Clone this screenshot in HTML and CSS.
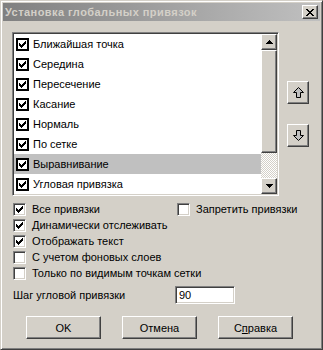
FILE: index.html
```html
<!DOCTYPE html>
<html lang="ru">
<head>
    <meta charset="UTF-8">
    <meta name="viewport" content="width=device-width, initial-scale=1.0">
    <title>Установка глобальных привязок</title>
    <link rel="stylesheet" href="styles.css">
</head>
<body>
    <div class="window">
        <div class="title-bar">
            <span class="title">Установка глобальных привязок</span>
            <button class="close-btn">
                <svg width="8" height="7" viewBox="0 0 8 7"><path d="M0 0h2v1h-2z M6 0h2v1h-2z M1 1h2v1h-2z M5 1h2v1h-2z M2 2h4v1h-4z M3 3h2v1h-2z M2 4h4v1h-4z M1 5h2v1h-2z M5 5h2v1h-2z M0 6h2v1h-2z M6 6h2v1h-2z" fill="#000"/></svg>
            </button>
        </div>
        <div class="content">
            <div class="top-row">
                <div class="listbox">
                    <div class="list-items">
                        <div class="item"><span class="lb-check"><svg width="9" height="9" viewBox="0 0 9 9"><path class="tick" d="M1 3h1v1h1v1h1v-1h1v-1h1v-1h1v-1h1v3h-1v1h-1v1h-1v1h-1v1h-1v-1h-1v-1h-1z"/></svg></span>Ближайшая точка</div>
                        <div class="item"><span class="lb-check"><svg width="9" height="9" viewBox="0 0 9 9"><path class="tick" d="M1 3h1v1h1v1h1v-1h1v-1h1v-1h1v-1h1v3h-1v1h-1v1h-1v1h-1v1h-1v-1h-1v-1h-1z"/></svg></span>Середина</div>
                        <div class="item"><span class="lb-check"><svg width="9" height="9" viewBox="0 0 9 9"><path class="tick" d="M1 3h1v1h1v1h1v-1h1v-1h1v-1h1v-1h1v3h-1v1h-1v1h-1v1h-1v1h-1v-1h-1v-1h-1z"/></svg></span>Пересечение</div>
                        <div class="item"><span class="lb-check"><svg width="9" height="9" viewBox="0 0 9 9"><path class="tick" d="M1 3h1v1h1v1h1v-1h1v-1h1v-1h1v-1h1v3h-1v1h-1v1h-1v1h-1v1h-1v-1h-1v-1h-1z"/></svg></span>Касание</div>
                        <div class="item"><span class="lb-check"><svg width="9" height="9" viewBox="0 0 9 9"><path class="tick" d="M1 3h1v1h1v1h1v-1h1v-1h1v-1h1v-1h1v3h-1v1h-1v1h-1v1h-1v1h-1v-1h-1v-1h-1z"/></svg></span>Нормаль</div>
                        <div class="item"><span class="lb-check"><svg width="9" height="9" viewBox="0 0 9 9"><path class="tick" d="M1 3h1v1h1v1h1v-1h1v-1h1v-1h1v-1h1v3h-1v1h-1v1h-1v1h-1v1h-1v-1h-1v-1h-1z"/></svg></span>По сетке</div>
                        <div class="item selected"><span class="lb-check"><svg width="9" height="9" viewBox="0 0 9 9"><path class="tick" d="M1 3h1v1h1v1h1v-1h1v-1h1v-1h1v-1h1v3h-1v1h-1v1h-1v1h-1v1h-1v-1h-1v-1h-1z"/></svg></span>Выравнивание</div>
                        <div class="item"><span class="lb-check"><svg width="9" height="9" viewBox="0 0 9 9"><path class="tick" d="M1 3h1v1h1v1h1v-1h1v-1h1v-1h1v-1h1v3h-1v1h-1v1h-1v1h-1v1h-1v-1h-1v-1h-1z"/></svg></span>Угловая привязка</div>
                    </div>
                    <div class="scrollbar">
                        <div class="raised sb-btn"><svg width="7" height="4" viewBox="0 0 7 4"><path d="M3 0h1v1h1v1h1v1h1v1h-7v-1h1v-1h1v-1h1z" fill="#000"/></svg></div>
                        <div class="raised sb-thumb"></div>
                        <div class="sb-track"></div>
                        <div class="raised sb-btn"><svg width="7" height="4" viewBox="0 0 7 4"><path d="M0 0h7v1h-1v1h-1v1h-1v1h-1v-1h-1v-1h-1v-1h-1z" fill="#000"/></svg></div>
                    </div>
                </div>
                <div class="order-buttons">
                    <button class="raised order-btn">
                        <svg width="11" height="11" viewBox="0 0 11 11"><polygon points="5.5,0.5 10.5,5.5 7.5,5.5 7.5,10.5 3.5,10.5 3.5,5.5 0.5,5.5" fill="#c0c0c0" stroke="#000" stroke-width="1"/></svg>
                    </button>
                    <button class="raised order-btn">
                        <svg width="11" height="11" viewBox="0 0 11 11"><polygon points="3.5,0.5 7.5,0.5 7.5,5.5 10.5,5.5 5.5,10.5 0.5,5.5 3.5,5.5" fill="#c0c0c0" stroke="#000" stroke-width="1"/></svg>
                    </button>
                </div>
            </div>

            <div class="options">
                <label class="option"><span class="check"><svg width="9" height="9" viewBox="0 0 9 9"><path class="tick" d="M1 3h1v1h1v1h1v-1h1v-1h1v-1h1v-1h1v3h-1v1h-1v1h-1v1h-1v1h-1v-1h-1v-1h-1z"/></svg></span>Все привязки</label>
                <label class="option"><span class="check"></span>Запретить привязки</label>
                <label class="option"><span class="check"><svg width="9" height="9" viewBox="0 0 9 9"><path class="tick" d="M1 3h1v1h1v1h1v-1h1v-1h1v-1h1v-1h1v3h-1v1h-1v1h-1v1h-1v1h-1v-1h-1v-1h-1z"/></svg></span>Динамически отслеживать</label>
                <span></span>
                <label class="option"><span class="check"><svg width="9" height="9" viewBox="0 0 9 9"><path class="tick" d="M1 3h1v1h1v1h1v-1h1v-1h1v-1h1v-1h1v3h-1v1h-1v1h-1v1h-1v1h-1v-1h-1v-1h-1z"/></svg></span>Отображать текст</label>
                <span></span>
                <label class="option wide"><span class="check"></span>С учетом фоновых слоев</label>
                <label class="option wide"><span class="check"></span>Только по видимым точкам сетки</label>
            </div>

            <div class="step-row">
                <span class="step-label">Шаг угловой привязки</span>
                <div class="text-input">90</div>
            </div>

            <div class="actions">
                <button class="raised push-btn">OK</button>
                <button class="raised push-btn">Отмена</button>
                <button class="raised push-btn">С<u>п</u>равка</button>
            </div>
        </div>
    </div>
</body>
</html>
```

FILE: styles.css
```css
* {
    box-sizing: border-box;
}
body {
    margin: 0;
    background: #d4d0c8;
    font-family: "Liberation Sans", Arial, sans-serif;
    font-size: 11px;
    color: #000;
}
.window {
    width: 323px;
    height: 350px;
    background: #d4d0c8;
    border: 1px solid;
    border-color: #d4d0c8 #404040 #404040 #d4d0c8;
    box-shadow: inset 1px 1px #fff, inset -1px -1px #808080;
    padding: 2px;
}
.title-bar {
    height: 18px;
    display: flex;
    align-items: center;
    justify-content: space-between;
    padding: 0 2px 0 2px;
    background: linear-gradient(to right, #808080, #c0c0c0);
}
.title {
    color: #d4d0c8;
    font-weight: bold;
    font-size: 11px;
    letter-spacing: 0.45px;
}
.raised {
    background: #d4d0c8;
    border: 1px solid;
    border-color: #fff #404040 #404040 #fff;
    box-shadow: inset -1px -1px #808080, inset 1px 1px #d4d0c8;
    padding: 0;
    font: inherit;
    color: #000;
}
.close-btn {
    width: 16px;
    height: 14px;
    background: #d4d0c8;
    border: 1px solid;
    border-color: #fff #404040 #404040 #fff;
    box-shadow: inset -1px -1px #808080;
    padding: 0;
    display: flex;
    align-items: center;
    justify-content: center;
}
.content {
    padding: 11px 0 0 9px;
}
.top-row {
    display: flex;
    gap: 8px;
}
.listbox {
    width: 267px;
    height: 164px;
    display: flex;
    background: #fff;
    border: 1px solid;
    border-color: #808080 #fff #fff #808080;
    box-shadow: inset 1px 1px #404040, inset -1px -1px #d4d0c8;
    padding: 1px;
}
.list-items {
    flex: 1;
}
.item {
    height: 20px;
    display: flex;
    align-items: center;
    gap: 4px;
    padding-left: 2px;
}
.item.selected {
    background: #c0c0c0;
}
.lb-check {
    width: 13px;
    height: 13px;
    border: 2px solid #000;
    background: #fff;
    display: flex;
    align-items: center;
    justify-content: center;
}
.tick {
    fill: #000;
}
.scrollbar {
    width: 16px;
    display: flex;
    flex-direction: column;
}
.sb-btn {
    height: 16px;
    display: flex;
    align-items: center;
    justify-content: center;
}
.sb-thumb {
    height: 103px;
}
.sb-track {
    flex: 1;
    background: repeating-conic-gradient(#fff 0 25%, #d4d0c8 0 50%) 0 0 / 2px 2px;
}
.order-buttons {
    display: flex;
    flex-direction: column;
    gap: 20px;
    padding-top: 49px;
}
.order-btn {
    width: 22px;
    height: 23px;
    display: flex;
    align-items: center;
    justify-content: center;
}
.options {
    display: grid;
    grid-template-columns: 164px auto;
    grid-auto-rows: 16px;
    margin: 5px 0 0 1px;
}
.option {
    display: flex;
    align-items: center;
    gap: 6px;
    white-space: nowrap;
}
.option.wide {
    grid-column: 1 / 3;
}
.check {
    width: 13px;
    height: 13px;
    flex: none;
    background: #fff;
    border: 1px solid;
    border-color: #808080 #fff #fff #808080;
    box-shadow: inset 1px 1px #404040, inset -1px -1px #d4d0c8;
    display: flex;
    align-items: center;
    justify-content: center;
}
.step-row {
    display: flex;
    align-items: center;
    margin: 5px 0 0 1px;
}
.step-label {
    width: 162px;
}
.text-input {
    width: 60px;
    height: 18px;
    background: #fff;
    border: 1px solid;
    border-color: #808080 #fff #fff #808080;
    box-shadow: inset 1px 1px #404040, inset -1px -1px #d4d0c8;
    padding: 2px 3px;
    line-height: 12px;
}
.actions {
    display: flex;
    gap: 21px;
    margin: 12px 0 0 14px;
}
.push-btn {
    width: 75px;
    height: 23px;
}
```
